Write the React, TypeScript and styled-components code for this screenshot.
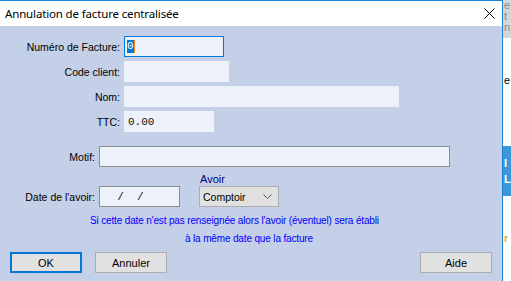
import styled, { createGlobalStyle } from "styled-components";

const GlobalStyle = createGlobalStyle`
  html, body {
    margin: 0;
    padding: 0;
    background: #ffffff;
    overflow: hidden;
  }
  body {
    font-family: "Liberation Sans", Arial, sans-serif;
    font-size: 10.5px;
    color: #000;
  }
`;

export default function App() {
  return (
    <>
      <GlobalStyle />
      <Screen>
        <Dialog>
          <TitleBar>
            <Title>Annulation de facture centralisée</Title>
            <CloseButton>
              <svg width="11" height="11" viewBox="0 0 11 11">
                <path d="M0.5 0.5 L10.5 10.5 M10.5 0.5 L0.5 10.5" stroke="#000" strokeWidth="1" />
              </svg>
            </CloseButton>
          </TitleBar>
          <Body>
            <FieldRow $labelWidth={120}>
              <Label>Numéro de Facture:</Label>
              <Input $width={100} $focused>
                <Selected>0</Selected>
                <Caret />
              </Input>
            </FieldRow>
            <FieldRow $labelWidth={120}>
              <Label>Code client:</Label>
              <Input $width={105} />
            </FieldRow>
            <FieldRow $labelWidth={120}>
              <Label>Nom:</Label>
              <Input $width={275} />
            </FieldRow>
            <FieldRow $labelWidth={120}>
              <Label>TTC:</Label>
              <Input $width={90}>0.00</Input>
            </FieldRow>

            <MotifRow $labelWidth={95}>
              <Label>Motif:</Label>
              <Input $width={351} $bordered />
            </MotifRow>

            <DateRow>
              <DateField $labelWidth={95}>
                <Label>Date de l'avoir:</Label>
                <Input $width={81} $bordered $pad={4}>
                  {"  /  /"}
                </Input>
              </DateField>
              <AvoirGroup>
                <AvoirLabel>Avoir</AvoirLabel>
                <Select>
                  <span>Comptoir</span>
                  <svg width="9" height="5" viewBox="0 0 9 5">
                    <path d="M0.5 0.5 L4.5 4.5 L8.5 0.5" stroke="#5a5a5a" strokeWidth="1" fill="none" />
                  </svg>
                </Select>
              </AvoirGroup>
            </DateRow>

            <Note>
              <NoteLine $indent={90}>Si cette date n'est pas renseignée alors l'avoir (éventuel) sera établi</NoteLine>
              <NoteLine $indent={185}>à la même date que la facture</NoteLine>
            </Note>

            <ButtonBar>
              <ButtonGroup>
                <Button $default>OK</Button>
                <Button>Annuler</Button>
              </ButtonGroup>
              <Button>Aide</Button>
            </ButtonBar>
          </Body>
        </Dialog>
        <Backdrop>
          <BackdropHeader>
            <span>e</span>
            <span>t</span>
            <span>n</span>
          </BackdropHeader>
          <BackdropGlyph>e</BackdropGlyph>
          <BackdropTile>
            <span>I</span>
            <span>L</span>
          </BackdropTile>
          <BackdropAccent>r</BackdropAccent>
        </Backdrop>
      </Screen>
    </>
  );
}

const Screen = styled.div`
  display: flex;
  width: 511px;
  height: 281px;
  overflow: hidden;
`;

const Dialog = styled.div`
  width: 503px;
  height: 281px;
  flex-shrink: 0;
  box-sizing: border-box;
  border-top: 1px solid #1883d7;
  border-right: 1px solid #1883d7;
  background: #c4cfe8;
  display: flex;
  flex-direction: column;
`;

const TitleBar = styled.div`
  height: 25px;
  background: #ffffff;
  display: flex;
  align-items: center;
  justify-content: space-between;
  padding: 0 7px 0 5px;
`;

const Title = styled.span`
  font-family: "Noto Sans", "Open Sans", sans-serif;
  font-size: 11.5px;
  color: #000;
  letter-spacing: -0.15px;
`;

const CloseButton = styled.span`
  display: flex;
  align-items: center;
`;

const Body = styled.div`
  flex: 1;
  display: flex;
  flex-direction: column;
  padding-top: 10px;
`;

const FieldRow = styled.div<{ $labelWidth: number }>`
  display: flex;
  align-items: center;
  height: 21px;
  margin-bottom: 4px;

  & > span:first-child {
    width: ${(p) => p.$labelWidth}px;
  }
`;

const Label = styled.span`
  text-align: right;
  padding-right: 4px;
  box-sizing: content-box;
  white-space: nowrap;
`;

const Input = styled.div<{ $width: number; $focused?: boolean; $bordered?: boolean; $pad?: number }>`
  width: ${(p) => p.$width}px;
  height: 21px;
  box-sizing: border-box;
  background: #edf1fa;
  border: 1px solid
    ${(p) => (p.$focused ? "#0078d7" : p.$bordered ? "#8c8c8c" : "transparent")};
  display: flex;
  align-items: center;
  padding-left: ${(p) => p.$pad ?? 3}px;
  font-family: "Liberation Mono", "Courier New", monospace;
  font-size: 11px;
  color: #111;
  white-space: pre;
`;

const Selected = styled.span`
  background: #0078d7;
  color: #ffffff;
  line-height: 13px;
  margin-left: -1px;
`;

const Caret = styled.span`
  width: 1px;
  height: 13px;
  background: #f0831e;
`;

const MotifRow = styled(FieldRow)`
  margin-top: 10px;
`;

const DateRow = styled.div`
  display: flex;
  align-items: flex-end;
  margin-top: 1px;
`;

const DateField = styled(FieldRow)`
  margin-bottom: 0;
`;

const AvoirGroup = styled.div`
  display: flex;
  flex-direction: column;
  margin-left: 19px;
`;

const AvoirLabel = styled.span`
  color: #000080;
  font-size: 11px;
  line-height: 14px;
  padding-left: 1px;
`;

const Select = styled.div`
  width: 80px;
  height: 21px;
  box-sizing: border-box;
  background: #e1e1e1;
  border: 1px solid #adadad;
  display: flex;
  align-items: center;
  justify-content: space-between;
  padding: 0 6px 0 3px;
  color: #000;
`;

const Note = styled.div`
  margin-top: 5px;
  display: flex;
  flex-direction: column;
`;

const NoteLine = styled.div<{ $indent: number }>`
  color: #0000ff;
  font-size: 10px;
  letter-spacing: -0.15px;
  line-height: 18px;
  padding-left: ${(p) => p.$indent}px;
  white-space: nowrap;
`;

const ButtonBar = styled.div`
  display: flex;
  justify-content: space-between;
  padding: 0 10px;
  margin-top: 4px;
`;

const ButtonGroup = styled.div`
  display: flex;
  gap: 13px;
`;

const Button = styled.button<{ $default?: boolean }>`
  width: 72px;
  height: 21px;
  box-sizing: border-box;
  background: #e1e1e1;
  border: ${(p) => (p.$default ? "2px solid #0078d7" : "1px solid #adadad")};
  font-family: "Liberation Sans", Arial, sans-serif;
  font-size: 11px;
  color: #000;
  padding: 0;
`;

const Backdrop = styled.div`
  flex: 1;
  display: flex;
  flex-direction: column;
  background: #ffffff;
  font-family: "Liberation Sans", Arial, sans-serif;
  overflow: hidden;
`;

const BackdropHeader = styled.div`
  height: 38px;
  background: #d6d6d6;
  color: #8a8a8a;
  display: flex;
  flex-direction: column;
  font-size: 11px;
  line-height: 11px;
  padding-left: 1px;
`;

const BackdropGlyph = styled.span`
  margin-top: 36px;
  font-size: 11px;
  padding-left: 1px;
  color: #000;
`;

const BackdropTile = styled.div`
  margin-top: 60px;
  height: 50px;
  background: #3a97da;
  color: #ffffff;
  font-weight: bold;
  font-size: 11px;
  display: flex;
  flex-direction: column;
  justify-content: center;
  gap: 4px;
  padding-left: 1px;
`;

const BackdropAccent = styled.span`
  margin-top: 36px;
  color: #f5a623;
  font-size: 11px;
  font-weight: bold;
  padding-left: 1px;
`;
